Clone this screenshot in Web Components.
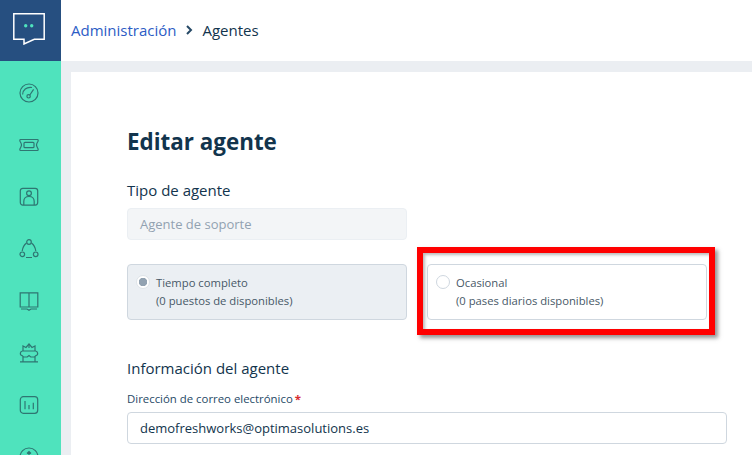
<!DOCTYPE html>
<html lang="es">
<head>
<meta charset="utf-8">
<title>Editar agente</title>
<style>
html, body { margin: 0; height: 455px; overflow: hidden; background: #ebeef2; }
body { font-family: "Open Sans", "Noto Sans", sans-serif; color: #12344d; }
</style>
</head>
<body>
<app-shell>
  <side-bar slot="side"></side-bar>
  <top-bar slot="top"></top-bar>
  <agent-form></agent-form>
</app-shell>

<script>
function shadow(el, html) {
  el.attachShadow({ mode: 'open' }).innerHTML = html;
}

customElements.define('app-shell', class extends HTMLElement {
  constructor() {
    super();
    shadow(this, `
    <style>
      :host { display: grid; grid-template-columns: 61px 1fr; grid-template-rows: 61px 1fr; height: 455px; overflow: hidden; }
      .side { grid-row: 1 / 3; display: flex; min-height: 0; }
      .main { min-width: 0; min-height: 0; padding: 11px 0 0 10px; overflow: hidden; }
    </style>
    <div class="side"><slot name="side"></slot></div>
    <slot name="top"></slot>
    <div class="main"><slot></slot></div>`);
  }
});

const icons = [
  // dashboard
  '<circle cx="10" cy="10" r="9"/><circle cx="9.600" cy="13.300" r="1.700"/><path d="M10.800 12l3.800-5.700M3.600 11.500C3.600 7 7.500 3.600 13 4.500"/>',
  // tickets
  '<path d="M1.500 4.500h17c.8 0 .8 1 .4 2-.4.900-1.400 2-1.400 3.500s1 2.600 1.400 3.500c.4 1 .4 2-.4 2h-17c-.8 0-.8-1-.4-2 .4-.9 1.400-2 1.400-3.500S1.500 7.400 1.100 6.500C.7 5.500.7 4.500 1.500 4.500z"/><rect x="5" y="7.300" width="10" height="5.400" rx="1"/>',
  // contacts
  '<rect x="1.300" y="1.300" width="17.400" height="16.800" rx="2.500"/><circle cx="10" cy="6.300" r="2.400"/><path d="M4.800 18v-3.500c0-3 2-5 5.200-5s5.200 2 5.200 5V18"/>',
  // groups
  '<circle cx="10" cy="3" r="2.300"/><circle cx="3.300" cy="15.300" r="2.300"/><circle cx="16.700" cy="15.300" r="2.300"/><path d="M7.500 4C5.300 5.700 3.700 8.500 3.200 12M12.500 4c2.200 1.700 3.800 4.500 4.300 8M7 18.500h6"/>',
  // solutions
  '<path d="M1.200 1.800H10V16H1.200zM10 1.800h8.800V16H10z"/><path d="M2 18h6l2 1.200 2-1.200h6"/>',
  // automations
  '<path d="M4 8V3l3 1.500L10 1l3 3.500L16 3v5"/><path d="M10 1v4M3.500 8h13c2.500 0 3 4 .5 4.500L15.500 14h-3.700L10 12.500 8.200 14H4.500L3 12.500C.5 12 1 8 3.500 8z"/><path d="M4 14v4.600M16 14v4.600M1 18.800h18"/>',
  // reports
  '<rect x="1.300" y="1.700" width="17.400" height="16.600" rx="3"/><path d="M6 6v8.300M10 10v4.300M14.300 7.700v6.600"/>',
  // help
  '<circle cx="10" cy="10" r="9"/><path d="M10 4.500v6M8 6.500l2-2 2 2"/>'
];

customElements.define('side-bar', class extends HTMLElement {
  constructor() {
    super();
    const items = icons.map(i => `<div class="item"><svg viewBox="0 0 20 20" width="20" height="20">${i}</svg></div>`).join('');
    shadow(this, `
    <style>
      :host { display: block; width: 61px; background: #4fe3bd; overflow: hidden; }
      .logo { box-sizing: border-box; height: 61px; padding: 13px 0 0 13px; background: #264f80; }
      .logo svg { display: block; stroke: none; }
      .list { padding-top: 6px; display: flex; flex-direction: column; }
      .item { box-sizing: border-box; height: 52px; flex: none; padding-left: 19px; display: flex; align-items: center; }
      svg { fill: none; stroke: #2f7672; stroke-width: 1.200; }
    </style>
    <div class="logo">
      <svg viewBox="0 0 32 32" width="32" height="32">
        <path d="M.8.8h30.400v25.500H21.300L11 31v-4.700H.8z" stroke="#fff" stroke-width="1.500"/>
        <circle cx="12.700" cy="12.700" r="1.700" fill="#4fe3bd"/>
        <circle cx="18.700" cy="12.700" r="1.700" fill="#4fe3bd"/>
      </svg>
    </div>
    <div class="list">${items}</div>`);
  }
});

customElements.define('top-bar', class extends HTMLElement {
  constructor() {
    super();
    shadow(this, `
    <style>
      :host { display: flex; align-items: center; gap: 9px; box-sizing: border-box; height: 61px; padding: 0 0 2px 10px; background: #fff; font-size: 15px; color: #12344d; }
      a { color: #2c5cc5; text-decoration: none; }
      svg { fill: none; stroke: #264966; stroke-width: 2; }
    </style>
    <a href="#">Administración</a>
    <svg viewBox="0 0 8 10" width="8" height="10"><path d="M2 1l4 4-4 4"/></svg>
    <span>Agentes</span>`);
  }
});

customElements.define('radio-card', class extends HTMLElement {
  constructor() {
    super();
    shadow(this, `
    <style>
      :host { display: flex; gap: 6px; box-sizing: border-box; width: 280px; height: 56px; padding: 9px 8px; background: #fff; border: 1px solid #cfd7df; border-radius: 4px; font-size: 11.250px; line-height: 18px; color: #475867; }
      :host([checked]) { background: #ebeff3; }
      .dot { flex: none; box-sizing: border-box; width: 14px; height: 14px; margin-top: 1px; border: 1px solid #cfd7df; border-radius: 50%; background: #fff; }
      :host([checked]) .dot { border-color: #dfe4e9; background: radial-gradient(circle, #92a2b1 0 4px, #fff 4.500px); }
    </style>
    <span class="dot"></span>
    <div><slot></slot></div>`);
  }
});

customElements.define('text-field', class extends HTMLElement {
  constructor() {
    super();
    shadow(this, `
    <style>
      :host { display: flex; align-items: center; box-sizing: border-box; height: 32px; padding: 0 12px; background: #fff; border: 1px solid #cfd7df; border-radius: 4px; font-size: 13px; color: #12344d; }
      :host([disabled]) { background: #f3f5f7; border-color: #ebeff3; color: #92a2b1; }
    </style>
    <slot></slot>`);
  }
});

customElements.define('agent-form', class extends HTMLElement {
  constructor() {
    super();
    shadow(this, `
    <style>
      :host { display: block; position: relative; height: 400px; box-sizing: border-box; padding: 54px 0 0 56px; background: #fff; }
      h1 { margin: 0; font-size: 22.400px; line-height: 32px; font-weight: 700; color: #12344d; }
      h2 { margin: 0; font-size: 15px; line-height: 20px; font-weight: 400; color: #12344d; }
      .type { margin-top: 22px; }
      .kind { width: 280px; margin-top: 8px; }
      .cards { display: flex; gap: 20px; margin-top: 24px; }
      .info { margin-top: 38px; }
      label { display: block; margin-top: 13px; font-size: 11.400px; line-height: 16px; color: #264966; }
      label b { margin-left: 2px; color: #d72d30; font-weight: 700; }
      .mail { width: 600px; margin-top: 5px; }
      .mark { position: absolute; left: 346px; top: 175px; box-sizing: border-box; width: 298px; height: 88px; border: 6px solid #f00; box-shadow: 3px 3px 4px rgba(60,60,60,.55), inset 2px 2px 3px rgba(60,60,60,.35); pointer-events: none; }
    </style>
    <h1>Editar agente</h1>
    <h2 class="type">Tipo de agente</h2>
    <text-field class="kind" disabled>Agente de soporte</text-field>
    <div class="cards">
      <radio-card checked>Tiempo completo<br>(0 puestos de disponibles)</radio-card>
      <radio-card>Ocasional<br>(0 pases diarios disponibles)</radio-card>
    </div>
    <h2 class="info">Información del agente</h2>
    <label>Dirección de correo electrónico<b>*</b></label>
    <text-field class="mail">demofreshworks@optimasolutions.es</text-field>
    <div class="mark"></div>`);
  }
});
</script>
</body>
</html>
